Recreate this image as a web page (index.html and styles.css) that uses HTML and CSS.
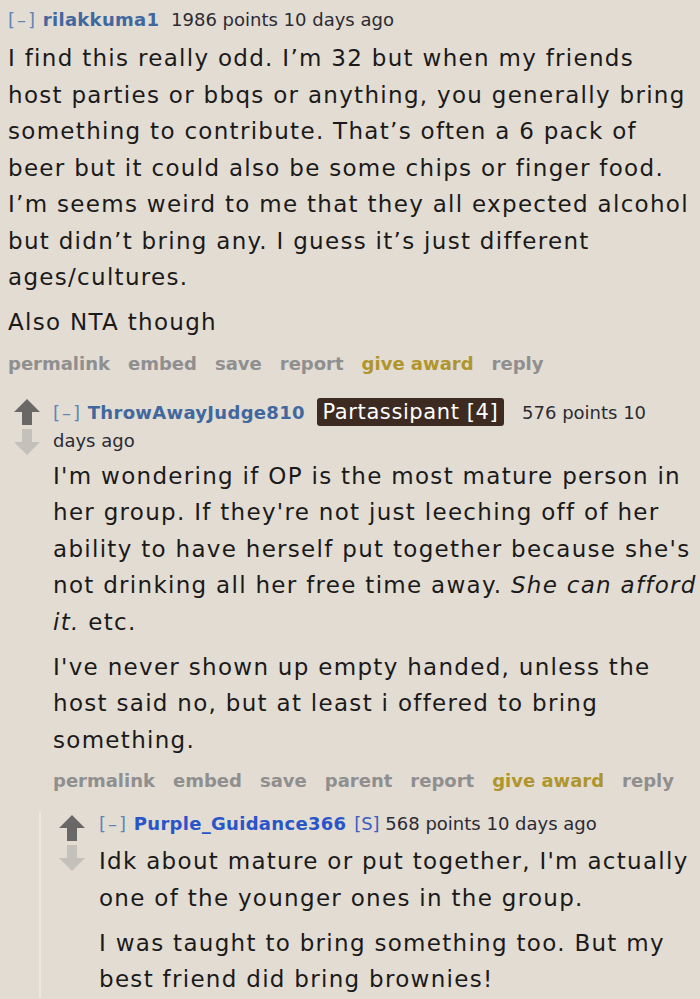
FILE: index.html
```html
<!DOCTYPE html>
<html lang="en">
<head>
<meta charset="utf-8">
<title>Comments</title>
<link rel="stylesheet" href="styles.css">
</head>
<body>
<div class="thread">
  <div class="comment c1">
    <div class="entry">
      <p class="tagline"><span class="expand">[–]</span> <span class="author">rilakkuma1</span> <span class="score">1986 points 10 days ago</span></p>
      <div class="md">
        <p>I find this really odd. I’m 32 but when my friends<br>host parties or bbqs or anything, you generally bring<br>something to contribute. That’s often a 6 pack of<br>beer but it could also be some chips or finger food.<br>I’m seems weird to me that they all expected alcohol<br>but didn’t bring any. I guess it’s just different<br>ages/cultures.</p>
        <p>Also NTA though</p>
      </div>
      <ul class="buttons">
        <li>permalink</li><li>embed</li><li>save</li><li>report</li><li class="award">give award</li><li>reply</li>
      </ul>
    </div>
  </div>

  <div class="comment c2">
    <div class="midcol">
      <svg class="arrow up" viewBox="0 0 26 26"><path d="M13 0 L26 13 L18 13 L18 26 L8 26 L8 13 L0 13 Z"/></svg>
      <svg class="arrow down" viewBox="0 0 26 26"><path d="M8 0 L18 0 L18 13 L26 13 L13 26 L0 13 L8 13 Z"/></svg>
    </div>
    <div class="entry">
      <p class="tagline"><span class="expand">[–]</span> <span class="author">ThrowAwayJudge810</span> <span class="flair">Partassipant [4]</span> <span class="score">576 points 10<br>days ago</span></p>
      <div class="md">
        <p>I'm wondering if OP is the most mature person in<br>her group. If they're not just leeching off of her<br>ability to have herself put together because she's<br>not drinking all her free time away. <em>She can afford<br>it.</em> etc.</p>
        <p>I've never shown up empty handed, unless the<br>host said no, but at least i offered to bring<br>something.</p>
      </div>
      <ul class="buttons">
        <li>permalink</li><li>embed</li><li>save</li><li>parent</li><li>report</li><li class="award">give award</li><li>reply</li>
      </ul>
    </div>
  </div>

  <div class="child">
    <div class="comment c3">
      <div class="midcol">
        <svg class="arrow up" viewBox="0 0 26 26"><path d="M13 0 L26 13 L18 13 L18 26 L8 26 L8 13 L0 13 Z"/></svg>
        <svg class="arrow down" viewBox="0 0 26 26"><path d="M8 0 L18 0 L18 13 L26 13 L13 26 L0 13 L8 13 Z"/></svg>
      </div>
      <div class="entry">
        <p class="tagline"><span class="expand">[–]</span> <span class="author op">Purple_Guidance366</span> <span class="submitter">[S]</span> <span class="score">568 points 10 days ago</span></p>
        <div class="md">
          <p>Idk about mature or put together, I'm actually<br>one of the younger ones in the group.</p>
          <p>I was taught to bring something too. But my<br>best friend did bring brownies!</p>
        </div>
      </div>
    </div>
  </div>
</div>
</body>
</html>
```

FILE: styles.css
```css
html, body {
  margin: 0;
  padding: 0;
  background: #e3dcd3;
  overflow: hidden;
}

.thread {
  padding: 8px 0 0 8px;
  font-family: "DejaVu Sans", Verdana, sans-serif;
  color: #1a1a1a;
}

.comment {
  display: flex;
  align-items: flex-start;
}

.entry {
  flex: 1;
  min-width: 0;
}

.tagline {
  margin: 0;
  font-size: 18px;
  line-height: 24px;
  color: #2b2b33;
  white-space: nowrap;
}

.expand {
  color: #5f86b8;
  font-weight: normal;
  letter-spacing: 2px;
}

.author {
  font-weight: bold;
  color: #41689e;
  margin: 0 6px 0 0;
  letter-spacing: 0.3px;
}

.author.op {
  color: #2a55c8;
  margin-right: 2px;
}

.submitter {
  color: #3a5fbf;
}

.flair {
  display: inline-block;
  background: #3d2b22;
  color: #fff;
  font-size: 21px;
  letter-spacing: 0.6px;
  line-height: 28px;
  padding: 0 6px;
  border-radius: 3px;
  margin-right: 12px;
}

.md {
  font-size: 23px;
  letter-spacing: 1.3px;
  line-height: 36.5px;
  white-space: nowrap;
}

.md p {
  margin: 0 0 8.5px;
}

.md p:last-child {
  margin-bottom: 0;
}

.c1 .md {
  margin-top: 8px;
}

.buttons {
  list-style: none;
  margin: 11px 0 0;
  padding: 0;
  display: flex;
  gap: 18px;
  font-size: 18px;
  font-weight: bold;
  line-height: 24px;
  color: #8f8f8f;
}

.buttons .award {
  color: #b0952c;
}

.midcol {
  display: flex;
  flex-direction: column;
  gap: 4px;
  flex: none;
}

.arrow {
  width: 26px;
  height: 26px;
  display: block;
}

.arrow.up { fill: #6a6866; }
.arrow.down { fill: #c4c0ba; }

.c2 {
  margin-top: 22px;
}

.c2 .midcol {
  margin: 1px 13px 0 6px;
}

.c2 .tagline {
  line-height: 28px;
}

.c2 .md {
  margin-top: 3px;
}

.child {
  margin: 19px 0 0 31px;
  border-left: 2px solid #ece7e0;
  padding-left: 18px;
}

.c3 .midcol {
  margin: 3px 14px 0 0;
}

.c3 .md {
  margin-top: 7px;
}
```
